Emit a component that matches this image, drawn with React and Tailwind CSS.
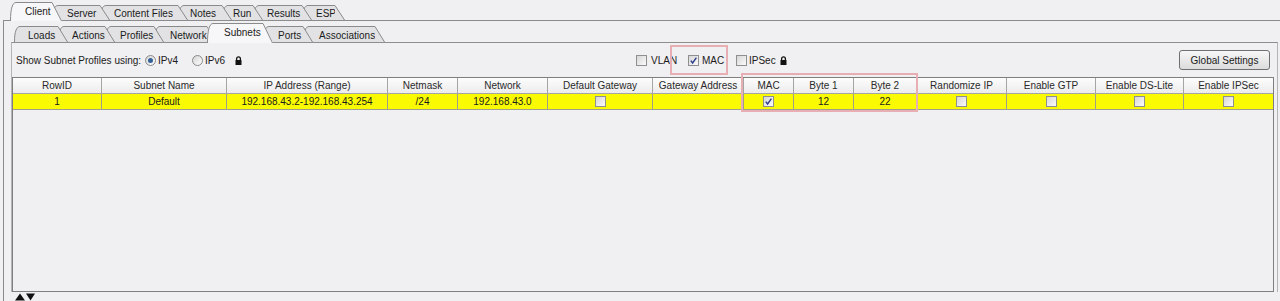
import React from "react";

const TOP = [
  { label: "Client", mid: "w-[36px]", pl: "pl-[9px]", sel: true, z: "z-[10]" },
  { label: "Server", mid: "w-[42px]", pl: "pl-[9px]", z: "z-[6]" },
  { label: "Content Files", mid: "w-[72px]", pl: "pl-[8px]", z: "z-[5]" },
  { label: "Notes", mid: "w-[38px]", pl: "pl-[6px]", z: "z-[4]" },
  { label: "Run", mid: "w-[25px]", pl: "pl-[5px]", z: "z-[3]" },
  { label: "Results", mid: "w-[43px]", pl: "pl-[8px]", z: "z-[2]" },
  { label: "ESP", mid: "w-[27px]", pl: "pl-[8px]", z: "z-[1]" },
];

const SECOND = [
  { label: "Loads", mid: "w-[38px]", pl: "pl-[8px]", z: "z-[7]" },
  { label: "Actions", mid: "w-[41px]", pl: "pl-[8px]", z: "z-[6]" },
  { label: "Profiles", mid: "w-[43px]", pl: "pl-[9px]", z: "z-[5]" },
  { label: "Network", mid: "w-[47px]", pl: "pl-[10px]", z: "z-[4]" },
  { label: "Subnets", mid: "w-[50px]", pl: "pl-[11px]", sel: true, z: "z-[10]" },
  { label: "Ports", mid: "w-[34px]", pl: "pl-[9px]", z: "z-[2]" },
  { label: "Associations", mid: "w-[66px]", pl: "pl-[10px]", z: "z-[1]" },
];

function Tab({ t, first, H, hCls }) {
  const fill = t.sel ? "#f7f6f8" : "#e2e2e4";
  const stroke = "#8a8a8a";
  return (
    <div
      className={`relative flex shrink-0 ${hCls} ${first ? "" : "-ml-[10px]"} ${t.z} ${
        t.sel ? "translate-y-[1px]" : ""
      }`}
    >
      <svg width="6" height={H} className="block shrink-0">
        <path d={`M0 ${H} C0 ${H * 0.35} 2 0.5 6 0.5 L6 ${H} Z`} fill={fill} />
        <path d={`M0.5 ${H} C0.5 ${H * 0.35} 2.5 0.5 6 0.5`} stroke={stroke} fill="none" />
      </svg>
      <div
        className={`flex shrink-0 items-center whitespace-nowrap border-t border-[#8a8a8a] ${t.mid} ${t.pl} ${
          t.sel ? "bg-[#f7f6f8] pb-[2px]" : "bg-[#e2e2e4] pt-[1px]"
        }`}
      >
        {t.label}
      </div>
      <svg width="10" height={H} className="block shrink-0">
        <path d={`M0 0.5 L10 ${H} L0 ${H} Z`} fill={fill} />
        <path d={`M0 0.5 L9.5 ${H}`} stroke={stroke} fill="none" />
      </svg>
    </div>
  );
}

function Box({ checked, cls = "" }) {
  return (
    <span
      className={`inline-flex h-[11px] w-[11px] shrink-0 items-center justify-center border border-[#8e8f8f] bg-linear-to-br from-[#d6d6d6] to-[#fbfbfb] ${cls}`}
    >
      {checked && (
        <svg width="9" height="9" viewBox="0 0 9 9">
          <path d="M1.8 4.6 L3.6 7 L7.4 1.6" stroke="#2c3f8c" strokeWidth="1.4" fill="none" />
        </svg>
      )}
    </span>
  );
}

function Radio({ checked, cls = "" }) {
  return (
    <span
      className={`inline-flex h-[11px] w-[11px] shrink-0 items-center justify-center rounded-full border border-[#8a8a8a] bg-linear-to-br from-[#d4d4d4] to-white ${cls}`}
    >
      {checked && <span className="h-[5px] w-[5px] rounded-full bg-[#35619a]" />}
    </span>
  );
}

function Lock({ cls = "" }) {
  return (
    <svg width="7" height="9" viewBox="0 0 7 9" className={`block shrink-0 ${cls}`}>
      <path d="M1.6 4.2V2.8a1.9 1.9 0 0 1 3.8 0V4.2" stroke="#111" strokeWidth="1.3" fill="none" />
      <rect x="0.5" y="4" width="6" height="5" rx="0.6" fill="#111" />
    </svg>
  );
}

const HEAD = [
  "RowID",
  "Subnet Name",
  "IP Address (Range)",
  "Netmask",
  "Network",
  "Default Gateway",
  "Gateway Address",
  "MAC",
  "Byte 1",
  "Byte 2",
  "Randomize IP",
  "Enable GTP",
  "Enable DS-Lite",
  "Enable IPSec",
];

const ROW = [
  "1",
  "Default",
  "192.168.43.2-192.168.43.254",
  "/24",
  "192.168.43.0",
  { box: false },
  "",
  { box: true },
  "12",
  "22",
  { box: false },
  { box: false },
  { box: false },
  { box: false },
];

export default function App() {
  return (
    <div className="relative h-[301px] w-[1280px] overflow-hidden bg-[#f0eff1] font-['Liberation_Sans',Arial,sans-serif] text-[10px] text-[#1b1b1b]">
      {/* top tabs */}
      <div className="flex h-[20px] items-end pl-[10px]">
        {TOP.map((t, i) => (
          <Tab key={t.label} t={t} first={i === 0} H={t.sel ? 19 : 15} hCls={t.sel ? "h-[19px]" : "h-[15px]"} />
        ))}
      </div>

      {/* outer panel */}
      <div className="ml-[3px] border-l border-t border-[#8c8c8c]">
        <div className="flex h-[21px] items-end pl-[10px]">
          {SECOND.map((t, i) => (
            <Tab key={t.label} t={t} first={i === 0} H={t.sel ? 20 : 16} hCls={t.sel ? "h-[20px]" : "h-[16px]"} />
          ))}
        </div>

        {/* inner panel */}
        <div className="ml-[7px] w-[1267px] border-x border-t border-x-[#b4b4b4] border-t-[#8e8e8e]">
          {/* options row */}
          <div className="flex h-[34px] items-center pl-[4px] pr-[7px]">
            <div className="flex w-[620px] items-center">
              <span className="w-[129px] whitespace-nowrap">Show Subnet Profiles using:</span>
              <Radio checked />
              <span className="ml-[2px] w-[34px]">IPv4</span>
              <Radio />
              <span className="ml-[2px] w-[30px]">IPv6</span>
              <Lock />
            </div>
            <div className="flex items-center">
              <Box />
              <span className="ml-[4px] w-[37px]">VLAN</span>
              <Box checked />
              <span className="ml-[3px] w-[34px]">MAC</span>
              <Box />
              <span className="ml-[2px] w-[31px]">IPSec</span>
              <Lock />
            </div>
            <button className="ml-auto flex h-[20px] w-[91px] items-center justify-center rounded-[3px] border border-[#707070] bg-linear-to-b from-[#f7f7f7] to-[#dcdcdc] text-[#1b1b1b]">
              Global Settings
            </button>
          </div>

          {/* table scroll pane */}
          <div className="h-[215px] w-[1262px] border border-[#7f7f7f]">
            <div className="grid grid-cols-[89px_125px_161px_70px_90px_105px_91px_50px_60px_63px_90px_89px_88px_89px]">
              {HEAD.map((h, i) => (
                <div
                  key={h}
                  className={`flex h-[16px] items-center justify-center whitespace-nowrap border-b border-[#a5a5a5] bg-linear-to-b from-[#fdfdfd] to-[#ececec] text-[#2a2a2a] ${
                    i === HEAD.length - 1 ? "" : "border-r"
                  }`}
                >
                  {h}
                </div>
              ))}
              {ROW.map((c, i) => (
                <div
                  key={i}
                  className={`flex h-[16px] items-center justify-center whitespace-nowrap border-b border-[#9f9f8a] bg-[#fafa02] ${
                    i === ROW.length - 1 ? "" : "border-r"
                  }`}
                >
                  {typeof c === "string" ? c : <Box checked={c.box} />}
                </div>
              ))}
            </div>
          </div>
        </div>

        {/* split arrows */}
        <div className="flex h-[9px] items-center pl-[11px]">
          <svg width="21" height="8" viewBox="0 0 21 8" className="block">
            <path d="M0 7.5 L5 0.5 L10 7.5 Z" fill="#111" />
            <path d="M11 0.5 L20 0.5 L15.5 7.5 Z" fill="#111" />
          </svg>
        </div>
      </div>

      {/* annotation boxes */}
      <div className="pointer-events-none absolute left-[670px] top-[45px] h-[30px] w-[58px] border-2 border-[#e7aeb3]" />
      <div className="pointer-events-none absolute left-[741px] top-[73px] h-[39px] w-[177px] border-2 border-[#e7aeb3]" />
    </div>
  );
}
